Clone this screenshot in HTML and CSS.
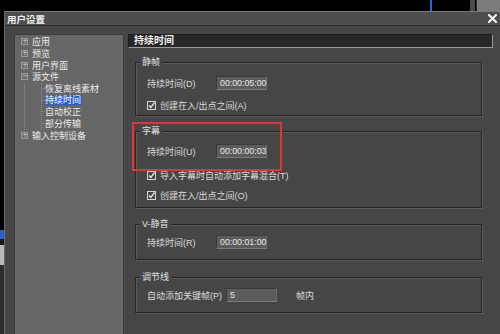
FILE: index.html
```html
<!DOCTYPE html>
<html lang="zh-CN">
<head>
<meta charset="utf-8">
<title>用户设置</title>
<link rel="stylesheet" href="styles.css">
</head>
<body>
<div class="screen">
  <div class="topstrip">
    <i class="blue-line"></i>
    <i class="sb-dark"></i>
    <i class="sb-light"></i>
  </div>
  <div class="desk">
    <div class="edge">
      <i class="edge-black"></i>
      <i class="edge-blue"></i>
      <i class="edge-gap"></i>
      <i class="edge-light"></i>
      <i class="edge-dark"></i>
    </div>
    <div class="dialog">
      <div class="titlebar">
        <span class="title">用户设置</span>
        <svg class="close" width="9" height="9" viewBox="0 0 9 9"><path d="M1 1 L8 8 M8 1 L1 8" stroke="#f4f4f4" stroke-width="2" stroke-linecap="square"/></svg>
      </div>
      <div class="body">
        <div class="tree">
          <div class="row"><span class="pm">+</span><span class="lbl">应用</span></div>
          <div class="row"><span class="pm">+</span><span class="lbl">预览</span></div>
          <div class="row"><span class="pm">+</span><span class="lbl">用户界面</span></div>
          <div class="row"><span class="pm minus">−</span><span class="lbl">源文件</span></div>
          <div class="children">
            <div class="children-inner">
              <div class="crow"><i class="tick"></i><span class="clbl">恢复离线素材</span></div>
              <div class="crow"><i class="tick"></i><span class="clbl sel">持续时间</span></div>
              <div class="crow"><i class="tick"></i><span class="clbl">自动校正</span></div>
              <div class="crow"><i class="tick"></i><span class="clbl">部分传输</span></div>
            </div>
          </div>
          <div class="row"><span class="pm">+</span><span class="lbl">输入控制设备</span></div>
        </div>
        <div class="content">
          <div class="header">持续时间</div>

          <div class="group g1">
            <span class="legend">静帧</span>
            <div class="field f1">
              <span class="flabel">持续时间(D)</span>
              <span class="input">00:00:05:00</span>
            </div>
            <div class="field f2">
              <svg class="cb" width="9" height="9" viewBox="0 0 9 9"><rect x="0.5" y="0.5" width="8" height="8" fill="none" stroke="#d4d4d4"/><path d="M2 4.5 L3.8 6.5 L7.5 1.5" fill="none" stroke="#e6e6e6" stroke-width="1.3"/></svg>
              <span class="clabel">创建在入/出点之间(A)</span>
            </div>
          </div>

          <div class="group g2">
            <span class="legend">字幕</span>
            <div class="field f1">
              <span class="flabel">持续时间(U)</span>
              <span class="input">00:00:00:03</span>
            </div>
            <div class="field f2">
              <svg class="cb" width="9" height="9" viewBox="0 0 9 9"><rect x="0.5" y="0.5" width="8" height="8" fill="none" stroke="#d4d4d4"/><path d="M2 4.5 L3.8 6.5 L7.5 1.5" fill="none" stroke="#e6e6e6" stroke-width="1.3"/></svg>
              <span class="clabel">导入字幕时自动添加字幕混合(T)</span>
            </div>
            <div class="field f3">
              <svg class="cb" width="9" height="9" viewBox="0 0 9 9"><rect x="0.5" y="0.5" width="8" height="8" fill="none" stroke="#d4d4d4"/><path d="M2 4.5 L3.8 6.5 L7.5 1.5" fill="none" stroke="#e6e6e6" stroke-width="1.3"/></svg>
              <span class="clabel">创建在入/出点之间(O)</span>
            </div>
            <div class="redbox"></div>
          </div>

          <div class="group g3">
            <span class="legend">V-静音</span>
            <div class="field f1">
              <span class="flabel">持续时间(R)</span>
              <span class="input">00:00:01:00</span>
            </div>
          </div>

          <div class="group g4">
            <span class="legend">调节线</span>
            <div class="field f1">
              <span class="flabel wide">自动添加关键帧(P)</span>
              <span class="input">5</span>
              <span class="unit">帧内</span>
            </div>
          </div>
        </div>
      </div>
    </div>
  </div>
</div>
</body>
</html>
```

FILE: styles.css
```css
* { box-sizing: border-box; }
html, body { margin: 0; padding: 0; }
body {
  background: #000;
  font-family: "Liberation Sans", "Noto Sans CJK SC", sans-serif;
  font-size: 9px;
  color: #dcdcdc;
}
.screen {
  width: 500px;
  height: 334px;
  overflow: hidden;
  display: flex;
  flex-direction: column;
}
.topstrip {
  height: 11px;
  display: flex;
  flex: none;
}
.topstrip i { display: block; height: 100%; }
.blue-line { margin-left: 430px; width: 2px; background: #2f63d0; }
.sb-dark { margin-left: 38px; width: 5px; background: #4b4b4b; }
.sb-light { margin-left: 1px; flex: 1; background: #7c7c7c; border-left: 1px solid #2e2e2e; }

.desk { flex: 1; display: flex; min-height: 0; }
.edge { width: 4px; display: flex; flex-direction: column; flex: none; }
.edge i { display: block; }
.edge-black { height: 219px; background: #000; }
.edge-blue { height: 9px; background: #2a5fbf; }
.edge-gap { height: 6px; background: #1a1a1a; }
.edge-light { height: 20px; background: #b8b8b8; }
.edge-dark { flex: 1; background: #2c2c2c; }

.dialog {
  flex: 1;
  display: flex;
  flex-direction: column;
  background: #464646;
  border-left: 1px solid #6a6a6a;
  border-top: 1px solid #7a7a7a;
}
.titlebar {
  height: 14px;
  flex: none;
  background: #4e4e4e;
  border-bottom: 1px solid #2f2f2f;
  display: flex;
  align-items: center;
  justify-content: space-between;
  padding: 0 3px 0 2px;
}
.title { font-weight: bold; color: #f0f0f0; font-size: 9.5px; }
.close { display: block; }

.body {
  flex: 1;
  display: flex;
  gap: 4px;
  padding: 8px 7px 0 9px;
  min-height: 0;
}
.tree {
  width: 110px;
  flex: none;
  background: #666;
  border: 1px solid #3c3c3c;
  border-bottom: none;
  padding-top: 1px;
  color: #ececec;
}
.row {
  height: 11.7px;
  display: flex;
  align-items: center;
  padding-left: 6px;
}
.pm {
  width: 7px;
  height: 7px;
  border: 1px solid #9a9a9a;
  background: #6e6e6e;
  color: #cfcfcf;
  font-size: 7px;
  line-height: 5px;
  text-align: center;
  font-family: "DejaVu Sans", sans-serif;
  flex: none;
}
.lbl { margin-left: 4px; white-space: nowrap; }
.children {
  margin-left: 9px;
  border-left: 1px dotted #8e8e8e;
}
.children-inner {
  margin-left: 16px;
  border-left: 1px dotted #8e8e8e;
}
.crow {
  height: 11.7px;
  display: flex;
  align-items: center;
}
.tick { display: block; width: 3px; border-top: 1px dotted #8e8e8e; flex: none; }
.clbl { white-space: nowrap; line-height: 10px; }
.sel { background: #2b62c8; color: #fff; padding: 0 1px 0 0; }

.content {
  flex: 1;
  display: flex;
  flex-direction: column;
}
.header {
  height: 14px;
  background: #272727;
  border-top: 1px solid #1c1c1c;
  border-left: 1px solid #1c1c1c;
  border-right: 1px solid #9a9a9a;
  border-bottom: 1px solid #9a9a9a;
  color: #f2f2f2;
  font-weight: bold;
  font-size: 10px;
  line-height: 12px;
  padding-left: 5px;
}
.group {
  position: relative;
  margin: 0 11px 0 7px;
  border: 1px solid #262626;
  box-shadow: inset 1px 1px 0 #5a5a5a, 1px 1px 0 #5a5a5a;
  display: flex;
  flex-direction: column;
  align-items: flex-start;
}
.legend {
  display: block;
  margin: -6px 0 0 4px;
  padding: 0 2px;
  height: 11px;
  line-height: 11px;
  background: #464646;
  color: #e2e2e2;
}
.field {
  display: flex;
  align-items: center;
  height: 14px;
  padding-left: 11px;
  white-space: nowrap;
}
.flabel { width: 69px; }
.flabel.wide { width: 79px; }
.input {
  width: 51px;
  height: 14px;
  background: #5c5c5c;
  border-top: 1px solid #3a3a3a;
  border-left: 1px solid #3a3a3a;
  border-bottom: 1px solid #7c7c7c;
  border-right: 1px solid #707070;
  padding-left: 3px;
  line-height: 12px;
  color: #e8e8e8;
  font-size: 8.8px;
}
.unit { margin-left: 19px; }
.cb { display: block; flex: none; }
.clabel { margin-left: 4px; }

.g1 { margin-top: 14px; padding-bottom: 3px; }
.g1 .f1 { margin-top: 8px; }
.g1 .f2 { margin-top: 8px; }

.g2 { margin-top: 15px; padding-bottom: 5px; }
.g2 .f1 { margin-top: 7px; }
.g2 .f2 { margin-top: 10px; }
.g2 .f3 { margin-top: 6px; }

.g3 { margin-top: 16px; padding-bottom: 10px; }
.g3 .f1 { margin-top: 5px; }

.g4 { margin-top: 17px; padding-bottom: 10px; }
.g4 .f1 { margin-top: 5px; }

.redbox {
  position: absolute;
  top: -10px;
  left: -4px;
  width: 150px;
  height: 49px;
  border: 2px solid #e03535;
}
```
